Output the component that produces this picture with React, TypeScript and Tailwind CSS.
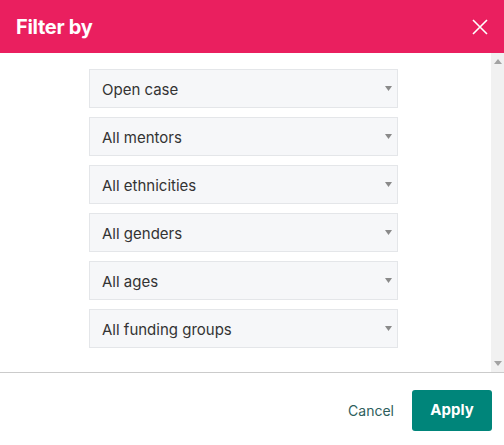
import React from "react";

const options = [
  "Open case",
  "All mentors",
  "All ethnicities",
  "All genders",
  "All ages",
  "All funding groups",
];

function Caret() {
  return (
    <svg width="7" height="5" viewBox="0 0 7 5" className="shrink-0">
      <path d="M0 0 H7 L3.5 5 Z" fill="#8a8a8a" />
    </svg>
  );
}

export default function App() {
  return (
    <div
      className="w-[504px] h-[445px] bg-white flex flex-col overflow-hidden"
      style={{ fontFamily: "Inter, Lato, sans-serif" }}
    >
      <div className="h-[53px] shrink-0 bg-[#EA1F5F] flex items-center justify-between pl-4 pr-4">
        <span className="text-white font-bold text-[20px] tracking-[-0.3px]">Filter by</span>
        <svg width="16" height="16" viewBox="0 0 16 16">
          <path d="M1 1 L15 15 M15 1 L1 15" stroke="white" strokeWidth="1.6" />
        </svg>
      </div>
      <div className="h-[319px] shrink-0 flex">
        <div className="flex-1 flex flex-col items-center pt-4 gap-[9px] pr-[4px]">
          {options.map((o) => (
            <div
              key={o}
              className="w-[309px] h-[39px] bg-[#F6F7F9] border border-[#E4E6E9] flex items-center justify-between pl-3 pr-[5px] text-[15px] text-[#333]"
            >
              <span className="pt-[3px]">{o}</span>
              <Caret />
            </div>
          ))}
        </div>
        <div className="w-[13px] bg-[#F1F1F1] flex flex-col items-center justify-between py-[6px]">
          <svg width="8" height="5" viewBox="0 0 8 5">
            <path d="M0 5 H8 L4 0 Z" fill="#a3a3a3" />
          </svg>
          <svg width="8" height="5" viewBox="0 0 8 5">
            <path d="M0 0 H8 L4 5 Z" fill="#a3a3a3" />
          </svg>
        </div>
      </div>
      <div className="border-t border-[#CBCBCB] flex-1 flex items-start justify-end pt-[17px] pr-3 gap-[18px]">
        <button className="h-[41px] text-[14px] text-[#2E5E5C] px-0">Cancel</button>
        <button className="w-[80px] h-[41px] rounded-[3px] bg-[#00857A] text-white font-bold text-[15px]">
          Apply
        </button>
      </div>
    </div>
  );
}
